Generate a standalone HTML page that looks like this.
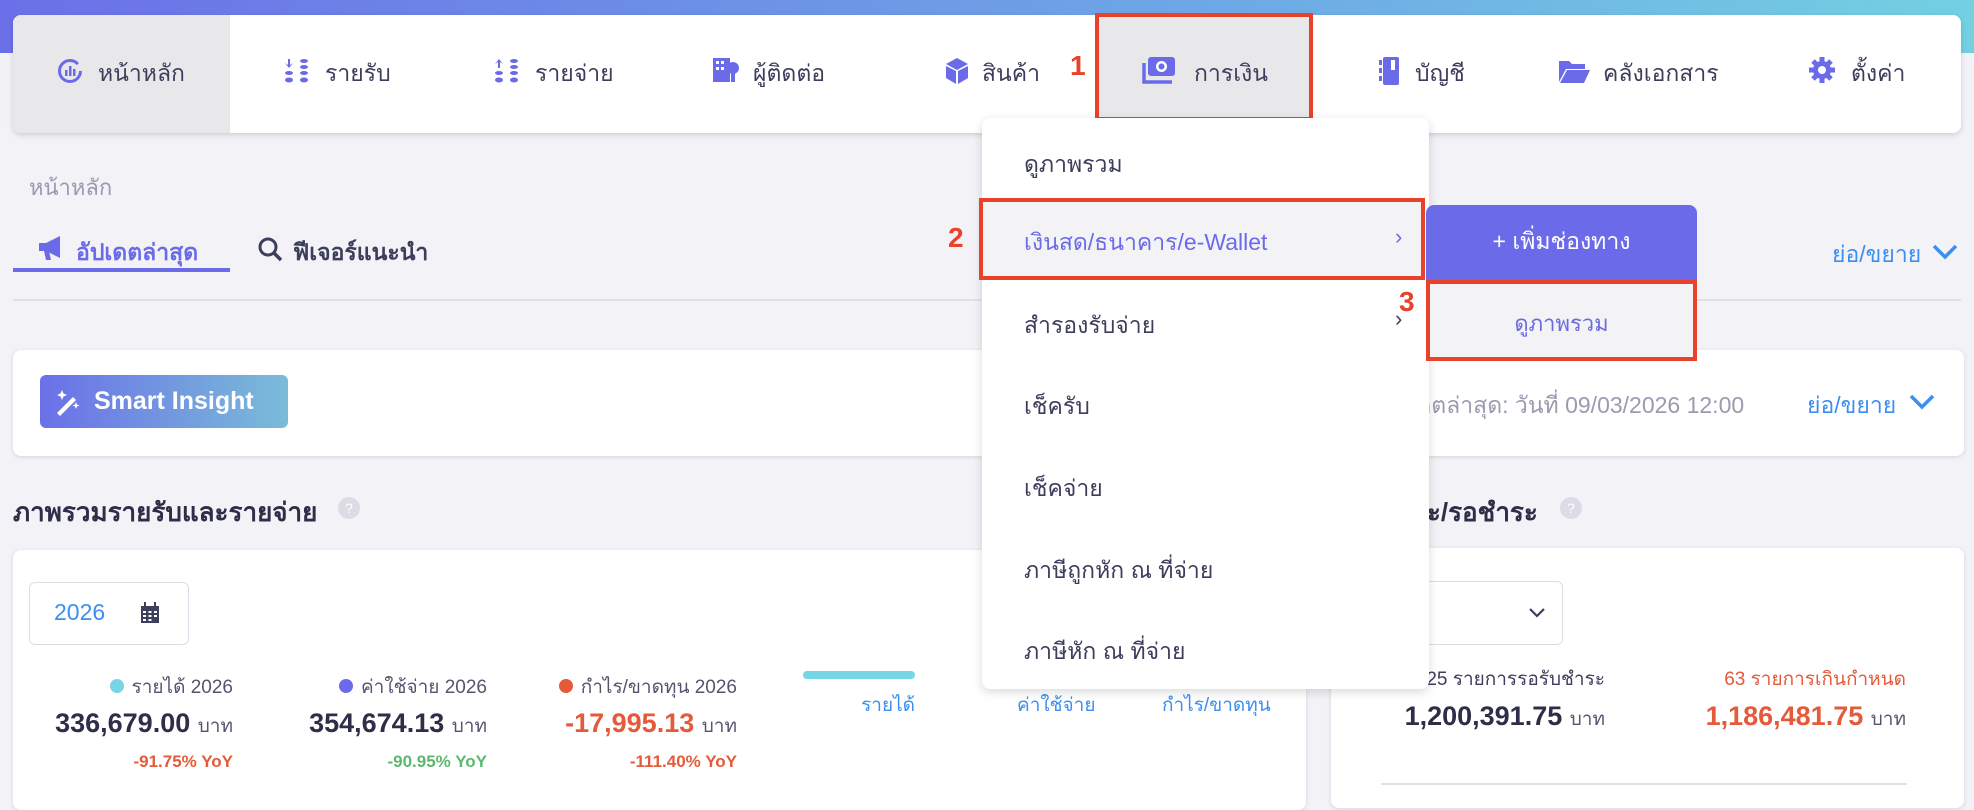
<!DOCTYPE html>
<html><head><meta charset="utf-8"><style>
*{margin:0;padding:0;box-sizing:border-box}
body{width:1974px;height:794px;overflow:hidden;background:#f2f2f7;font-family:"Liberation Sans","Noto Sans CJK SC",sans-serif;color:#3a3a5c;position:relative}
.a{position:absolute;white-space:nowrap}
.top{left:0;top:0;width:1974px;height:53px;background:linear-gradient(90deg,#6b70e8,#6ea6e6 60%,#72d0e2)}
.nav{left:13px;top:15px;width:1948px;height:118px;background:#fff;border-radius:8px;box-shadow:0 2px 6px rgba(0,0,0,.15);overflow:hidden}
.ni{font-size:23px;color:#3d3d5c;top:58px}
.card{background:#fff;border-radius:8px;box-shadow:0 1px 4px rgba(0,0,0,.12)}
.red{border:4px solid #e8432a}
.num{color:#e8432a;font-size:28px;font-weight:bold}
.mi{left:1024px;font-size:23px;color:#3d3d5c}
.gray{color:#9a9ab0}
.blue{color:#3b8ff0}
</style></head><body>
<div class="a top"></div>
<div class="a nav">
  <div class="a" style="left:0;top:0;width:217px;height:118px;background:#e8e8ea"></div>
</div>
<svg class="a" style="left:57px;top:58px" width="26" height="26" viewBox="0 0 26 26"><circle cx="13" cy="13" r="10.5" fill="none" stroke="#6b6bea" stroke-width="3" stroke-dasharray="58 8"/><rect x="8" y="12" width="2.5" height="6" fill="#6b6bea"/><rect x="12" y="8" width="2.5" height="10" fill="#6b6bea"/><rect x="16" y="11" width="2.5" height="7" fill="#6b6bea"/></svg>
<div class="a ni" style="left:98px;top:56px">หน้าหลัก</div>
<svg class="a" style="left:283px;top:57px" width="28" height="28" viewBox="0 0 28 28" fill="#6b6bea"><path d="M5 2v6l-3-2 4 5 4-5-3 2V2z"/><ellipse cx="6" cy="16" rx="4" ry="2"/><ellipse cx="6" cy="23" rx="4" ry="2.5"/><ellipse cx="21" cy="4" rx="4" ry="2"/><ellipse cx="21" cy="10" rx="4" ry="2"/><ellipse cx="21" cy="16" rx="4" ry="2"/><ellipse cx="21" cy="23" rx="4" ry="2.5"/></svg>
<div class="a ni" style="left:325px;top:56px">รายรับ</div>
<svg class="a" style="left:493px;top:57px" width="28" height="28" viewBox="0 0 28 28" fill="#6b6bea"><path d="M5 11V5l-3 2 4-5 4 5-3-2v6z"/><ellipse cx="6" cy="16" rx="4" ry="2"/><ellipse cx="6" cy="23" rx="4" ry="2.5"/><ellipse cx="21" cy="4" rx="4" ry="2"/><ellipse cx="21" cy="10" rx="4" ry="2"/><ellipse cx="21" cy="16" rx="4" ry="2"/><ellipse cx="21" cy="23" rx="4" ry="2.5"/></svg>
<div class="a ni" style="left:535px;top:56px">รายจ่าย</div>
<svg class="a" style="left:712px;top:56px" width="28" height="28" viewBox="0 0 28 28" fill="#6b6bea"><rect x="1" y="2" width="17" height="24"/><rect x="4" y="5" width="3" height="3" fill="#fff"/><rect x="9" y="5" width="3" height="3" fill="#fff"/><rect x="4" y="11" width="3" height="3" fill="#fff"/><rect x="9" y="11" width="3" height="3" fill="#fff"/><circle cx="21" cy="12" r="6"/><path d="M19 17h4v9h-4z"/></svg>
<div class="a ni" style="left:753px;top:56px">ผู้ติดต่อ</div>
<svg class="a" style="left:944px;top:57px" width="26" height="28" viewBox="0 0 26 28" fill="#6b6bea"><path d="M13 1l11 6-11 6L2 7z"/><path d="M2 9l10 5v13L2 21z"/><path d="M24 9l-10 5v13l10-6z"/></svg>
<div class="a ni" style="left:982px;top:56px">สินค้า</div>
<div class="a num" style="left:1070px;top:50px">1</div>
<div class="a" style="left:1095px;top:13px;width:218px;height:108px;background:#e8e8ea" ></div>
<div class="a red" style="left:1095px;top:13px;width:218px;height:108px"></div>
<svg class="a" style="left:1142px;top:56px" width="34" height="28" viewBox="0 0 34 28"><rect x="6" y="1" width="27" height="19" rx="3" fill="#6b6bea"/><circle cx="19.5" cy="10.5" r="5.5" fill="#fff"/><circle cx="19.5" cy="10.5" r="3" fill="#6b6bea"/><path d="M2 7v19h28" fill="none" stroke="#6b6bea" stroke-width="3.5"/></svg>
<div class="a ni" style="left:1194px;top:56px">การเงิน</div>
<svg class="a" style="left:1378px;top:56px" width="22" height="30" viewBox="0 0 22 30" fill="#6b6bea"><rect x="5" y="1" width="16" height="28" rx="2"/><rect x="1" y="4" width="3" height="5"/><rect x="1" y="12" width="3" height="5"/><rect x="1" y="20" width="3" height="5"/><rect x="13" y="4" width="4" height="10" fill="#fff"/></svg>
<div class="a ni" style="left:1415px;top:56px">บัญชี</div>
<svg class="a" style="left:1558px;top:58px" width="32" height="26" viewBox="0 0 32 26" fill="#6b6bea"><path d="M1 3h10l3 3h13v5H8L1 24z"/><path d="M9 12h23l-6 13H2z"/></svg>
<div class="a ni" style="left:1603px;top:56px">คลังเอกสาร</div>
<svg class="a" style="left:1808px;top:56px" width="28" height="28" viewBox="0 0 28 28"><circle cx="14" cy="14" r="9" fill="#6b6bea"/><g stroke="#6b6bea" stroke-width="5"><path d="M14 1v26M1 14h26M5 5l18 18M23 5L5 23"/></g><circle cx="14" cy="14" r="4" fill="#fff"/></svg>
<div class="a ni" style="left:1851px;top:56px">ตั้งค่า</div>

<div class="a gray" style="left:29px;top:170px;font-size:22px">หน้าหลัก</div>
<svg class="a" style="left:38px;top:235px" width="28" height="26" viewBox="0 0 28 26" fill="#6b6bea"><path d="M1 8h7l14-7v22L8 16H1z"/><path d="M6 16h5l2 9H8z"/></svg>
<div class="a" style="left:76px;top:235px;font-size:23px;font-weight:bold;color:#6b6bea">อัปเดตล่าสุด</div>
<div class="a" style="left:13px;top:268px;width:217px;height:4px;background:#6b6bea"></div>
<svg class="a" style="left:257px;top:236px" width="26" height="26" viewBox="0 0 26 26"><circle cx="11" cy="11" r="8" fill="none" stroke="#3d3d5c" stroke-width="3"/><path d="M17 17l7 7" stroke="#3d3d5c" stroke-width="3.5"/></svg>
<div class="a" style="left:293px;top:235px;font-size:23px;font-weight:bold;color:#3d3d5c">ฟีเจอร์แนะนำ</div>
<div class="a" style="left:13px;top:299px;width:1948px;height:2px;background:#e0e0e6"></div>
<div class="a blue" style="left:1832px;top:237px;font-size:23px">ย่อ/ขยาย</div>
<svg class="a" style="left:1932px;top:244px" width="26" height="16" viewBox="0 0 26 16"><path d="M2 2l11 11L24 2" fill="none" stroke="#3b8ff0" stroke-width="3.5"/></svg>

<div class="a card" style="left:13px;top:350px;width:1951px;height:106px"></div>
<div class="a" style="left:40px;top:375px;width:248px;height:53px;border-radius:6px;background:linear-gradient(90deg,#6b70e8,#79bcd8)"></div>
<svg class="a" style="left:54px;top:388px" width="28" height="28" viewBox="0 0 28 28" fill="#fff"><path d="M3 25L19 9l3 3L6 28z"/><path d="M8 2l1.5 3.5L13 7l-3.5 1.5L8 12 6.5 8.5 3 7l3.5-1.5z"/><path d="M22 14l1 2.5 2.5 1-2.5 1-1 2.5-1-2.5-2.5-1 2.5-1z"/></svg>
<div class="a" style="left:94px;top:387px;font-size:25px;font-weight:bold;color:#fff">Smart Insight</div>
<div class="a gray" style="left:1380px;top:388px;font-size:23px;color:#9a9ab0">อัปเดตล่าสุด: วันที่ 09/03/2026 12:00</div>
<div class="a blue" style="left:1807px;top:388px;font-size:23px">ย่อ/ขยาย</div>
<svg class="a" style="left:1909px;top:394px" width="26" height="16" viewBox="0 0 26 16"><path d="M2 2l11 11L24 2" fill="none" stroke="#3b8ff0" stroke-width="3.5"/></svg>

<div class="a" style="left:13px;top:492px;font-size:26px;font-weight:bold;color:#2e2e48">ภาพรวมรายรับและรายจ่าย</div>
<div class="a" style="left:338px;top:497px;width:22px;height:22px;border-radius:50%;background:#dcdce6;color:#fff;font-size:14px;text-align:center;line-height:22px">?</div>
<div class="a" style="left:1336px;top:492px;font-size:26px;font-weight:bold;color:#2e2e48">ค้างชำระ/รอชำระ</div>
<div class="a" style="left:1560px;top:497px;width:22px;height:22px;border-radius:50%;background:#dcdce6;color:#fff;font-size:14px;text-align:center;line-height:22px">?</div>

<div class="a card" style="left:13px;top:550px;width:1293px;height:260px"></div>
<div class="a" style="left:29px;top:582px;width:160px;height:63px;border:1.5px solid #dcdce6;border-radius:6px;background:#fff"></div>
<div class="a" style="left:54px;top:599px;font-size:23px;color:#3b8ff0">2026</div>
<svg class="a" style="left:140px;top:602px" width="20" height="22" viewBox="0 0 20 22" fill="#3d3d5c"><rect x="1" y="4" width="18" height="17"/><rect x="4" y="0" width="2" height="4"/><rect x="14" y="0" width="2" height="4"/><g fill="#fff"><rect x="3" y="9" width="3" height="2"/><rect x="8.5" y="9" width="3" height="2"/><rect x="14" y="9" width="3" height="2"/><rect x="3" y="13" width="3" height="2"/><rect x="8.5" y="13" width="3" height="2"/><rect x="14" y="13" width="3" height="2"/><rect x="3" y="17" width="3" height="2"/><rect x="8.5" y="17" width="3" height="2"/></g></svg>
<div class="a" style="left:40px;top:672px;width:193px;text-align:right;font-size:19px;color:#555570"><span style="display:inline-block;width:14px;height:14px;border-radius:50%;background:#76d6e6;margin-right:8px"></span>รายได้ 2026</div>
<div class="a" style="left:20px;top:708px;width:213px;text-align:right;font-size:27px;font-weight:bold;color:#2e2e48">336,679.00 <span style="font-size:19px;font-weight:normal;color:#555570">บาท</span></div>
<div class="a" style="left:40px;top:752px;width:193px;text-align:right;font-size:17px;font-weight:bold;color:#e55a3a">-91.75% YoY</div>
<div class="a" style="left:280px;top:672px;width:207px;text-align:right;font-size:19px;color:#555570"><span style="display:inline-block;width:14px;height:14px;border-radius:50%;background:#6b6bea;margin-right:8px"></span>ค่าใช้จ่าย 2026</div>
<div class="a" style="left:270px;top:708px;width:217px;text-align:right;font-size:27px;font-weight:bold;color:#2e2e48">354,674.13 <span style="font-size:19px;font-weight:normal;color:#555570">บาท</span></div>
<div class="a" style="left:280px;top:752px;width:207px;text-align:right;font-size:17px;font-weight:bold;color:#5cb870">-90.95% YoY</div>
<div class="a" style="left:520px;top:672px;width:217px;text-align:right;font-size:19px;color:#555570"><span style="display:inline-block;width:14px;height:14px;border-radius:50%;background:#e55a3a;margin-right:8px"></span>กำไร/ขาดทุน 2026</div>
<div class="a" style="left:520px;top:708px;width:217px;text-align:right;font-size:27px;font-weight:bold;color:#e55a3a">-17,995.13 <span style="font-size:19px;font-weight:normal;color:#555570">บาท</span></div>
<div class="a" style="left:520px;top:752px;width:217px;text-align:right;font-size:17px;font-weight:bold;color:#e55a3a">-111.40% YoY</div>
<div class="a" style="left:803px;top:671px;width:112px;height:8px;border-radius:4px;background:#76d6e6"></div>
<div class="a blue" style="left:803px;top:690px;width:112px;text-align:right;font-size:19px">รายได้</div>
<div class="a blue" style="left:1017px;top:690px;font-size:19px">ค่าใช้จ่าย</div>
<div class="a blue" style="left:1162px;top:690px;font-size:19px">กำไร/ขาดทุน</div>

<div class="a card" style="left:1331px;top:548px;height:260px;width:633px"></div>
<div class="a" style="left:1380px;top:581px;width:183px;height:64px;border:1.5px solid #dcdce6;border-radius:6px;background:#fff"></div>
<svg class="a" style="left:1528px;top:607px" width="18" height="12" viewBox="0 0 18 12"><path d="M2 2l7 7 7-7" fill="none" stroke="#3d3d5c" stroke-width="2.2"/></svg>
<div class="a" style="left:1380px;top:664px;width:225px;text-align:right;font-size:19px;color:#3d3d5c">25 รายการรอรับชำระ</div>
<div class="a" style="left:1650px;top:664px;width:256px;text-align:right;font-size:19px;color:#e55a3a">63 รายการเกินกำหนด</div>
<div class="a" style="left:1370px;top:701px;width:235px;text-align:right;font-size:27px;font-weight:bold;color:#2e2e48">1,200,391.75 <span style="font-size:19px;font-weight:normal;color:#555570">บาท</span></div>
<div class="a" style="left:1640px;top:701px;width:266px;text-align:right;font-size:27px;font-weight:bold;color:#e55a3a">1,186,481.75 <span style="font-size:19px;font-weight:normal;color:#555570">บาท</span></div>
<div class="a" style="left:1381px;top:783px;width:526px;height:2px;background:#e0e0e6"></div>

<div class="a" style="left:982px;top:118px;width:447px;height:571px;background:#fff;border-radius:8px;box-shadow:0 3px 10px rgba(0,0,0,.15)"></div>
<div class="a mi" style="top:147px">ดูภาพรวม</div>
<div class="a" style="left:982px;top:198px;width:443px;height:82px;background:#f3f3f6"></div>
<div class="a mi" style="top:225px;color:#6b6bea">เงินสด/ธนาคาร/e-Wallet</div>
<div class="a" style="left:1395px;top:224px;font-size:22px;color:#6b6bea">›</div>
<div class="a red" style="left:979px;top:198px;width:446px;height:82px"></div>
<div class="a mi" style="top:308px">สำรองรับจ่าย</div>
<div class="a" style="left:1395px;top:306px;font-size:22px;color:#3d3d5c">›</div>
<div class="a mi" style="top:389px">เช็ครับ</div>
<div class="a mi" style="top:471px">เช็คจ่าย</div>
<div class="a mi" style="top:553px">ภาษีถูกหัก ณ ที่จ่าย</div>
<div class="a mi" style="top:634px">ภาษีหัก ณ ที่จ่าย</div>
<div class="a num" style="left:948px;top:222px">2</div>

<div class="a" style="left:1426px;top:205px;width:271px;height:76px;background:#6b6bea;border-radius:8px 8px 0 0"></div>
<div class="a" style="left:1426px;top:224px;width:271px;text-align:center;font-size:23px;color:#fff">+ เพิ่มช่องทาง</div>
<div class="a" style="left:1426px;top:280px;width:271px;height:81px;background:#f3f3f6"></div>
<div class="a red" style="left:1426px;top:280px;width:271px;height:81px"></div>
<div class="a" style="left:1426px;top:306px;width:271px;text-align:center;font-size:22px;color:#6b6be0">ดูภาพรวม</div>
<div class="a num" style="left:1399px;top:286px">3</div>
</body></html>
